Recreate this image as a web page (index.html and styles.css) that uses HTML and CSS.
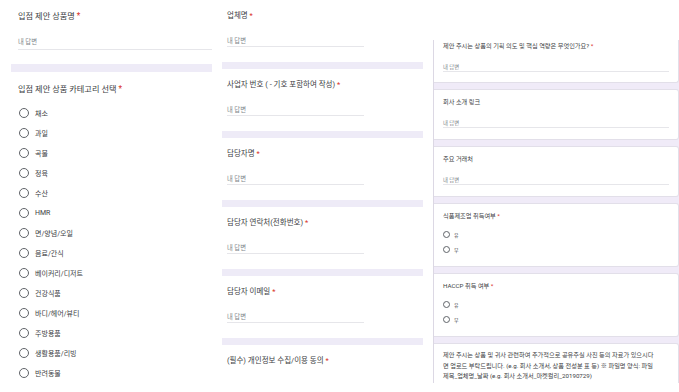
FILE: index.html
```html
<!DOCTYPE html>
<html lang="ko">
<head>
  <meta charset="UTF-8">
  <title>입점 제안</title>
  <link rel="stylesheet" href="styles.css">
</head>
<body>
  <div class="page">
    <!-- column 1 -->
    <div class="col col-a">
      <div class="q">
        <div class="title">입점 제안 상품명 <span class="req">*</span></div>
        <div class="answer">내 답변</div>
      </div>
      <div class="band"></div>
      <div class="q q-list">
        <div class="title">입점 제안 상품 카테고리 선택 <span class="req">*</span></div>
        <ul class="options">
          <li><span class="radio"></span>채소</li>
          <li><span class="radio"></span>과일</li>
          <li><span class="radio"></span>곡물</li>
          <li><span class="radio"></span>정육</li>
          <li><span class="radio"></span>수산</li>
          <li><span class="radio"></span>HMR</li>
          <li><span class="radio"></span>면/양념/오일</li>
          <li><span class="radio"></span>음료/간식</li>
          <li><span class="radio"></span>베이커리/디저트</li>
          <li><span class="radio"></span>건강식품</li>
          <li><span class="radio"></span>바디/헤어/뷰티</li>
          <li><span class="radio"></span>주방용품</li>
          <li><span class="radio"></span>생활용품/리빙</li>
          <li><span class="radio"></span>반려동물</li>
        </ul>
      </div>
    </div>

    <!-- column 2 -->
    <div class="col col-b">
      <div class="q">
        <div class="title">업체명 <span class="req">*</span></div>
        <div class="answer">내 답변</div>
      </div>
      <div class="band"></div>
      <div class="q">
        <div class="title">사업자 번호 ( - 기호 포함하여 작성) <span class="req">*</span></div>
        <div class="answer">내 답변</div>
      </div>
      <div class="band"></div>
      <div class="q">
        <div class="title">담당자명 <span class="req">*</span></div>
        <div class="answer">내 답변</div>
      </div>
      <div class="band"></div>
      <div class="q">
        <div class="title">담당자 연락처(전화번호) <span class="req">*</span></div>
        <div class="answer">내 답변</div>
      </div>
      <div class="band"></div>
      <div class="q">
        <div class="title">담당자 이메일 <span class="req">*</span></div>
        <div class="answer">내 답변</div>
      </div>
      <div class="band"></div>
      <div class="q">
        <div class="title">(필수) 개인정보 수집/이용 동의 <span class="req">*</span></div>
      </div>
    </div>

    <!-- column 3 -->
    <div class="col col-c">
      <div class="card card-first">
        <div class="title">제안 주시는 상품의 기획 의도 및 핵심 역량은 무엇인가요? <span class="req">*</span></div>
        <div class="answer">내 답변</div>
      </div>
      <div class="card">
        <div class="title">회사 소개 링크</div>
        <div class="answer">내 답변</div>
      </div>
      <div class="card">
        <div class="title">주요 거래처</div>
        <div class="answer">내 답변</div>
      </div>
      <div class="card card-radio">
        <div class="title">식품제조업 취득여부 <span class="req">*</span></div>
        <ul class="options">
          <li><span class="radio"></span>유</li>
          <li><span class="radio"></span>무</li>
        </ul>
      </div>
      <div class="card card-radio">
        <div class="title">HACCP 취득 여부 <span class="req">*</span></div>
        <ul class="options">
          <li><span class="radio"></span>유</li>
          <li><span class="radio"></span>무</li>
        </ul>
      </div>
      <div class="card card-text">
        <p>제안 주시는 상품 및 귀사 관련하여 추가적으로 공유주실 사진 등의 자료가 있으시다<br>면 업로드 부탁드립니다. (e.g. 회사 소개서, 상품 전성분 표 등) ※ 파일명 양식: 파일<br>제목_업체명_날짜 (e.g. 회사 소개서_마켓컬리_20190729)</p>
      </div>
    </div>
  </div>
</body>
</html>
```

FILE: styles.css
```css
* {
  margin: 0;
  padding: 0;
  box-sizing: border-box;
}

body {
  font-family: Roboto, 'Noto Sans CJK KR', sans-serif;
  background-color: #ffffff;
  color: #3c4043;
  width: 679px;
  height: 392px;
  overflow: hidden;
}

.page {
  display: flex;
  align-items: flex-start;
}

ul {
  list-style: none;
}

.req {
  color: #d93025;
}

.title {
  white-space: nowrap;
}

.answer {
  color: #80868b;
  border-bottom: 1px solid #e6e6ea;
}

.band {
  background-color: #eeebf7;
}

.radio {
  display: inline-block;
  border: 1.5px solid #5f6368;
  border-radius: 50%;
  flex: none;
}

.options li {
  display: flex;
  align-items: center;
}

/* Column 1 */
.col-a {
  width: 212px;
}

.col-a .q {
  padding: 10px 0 14px 18px;
}

.col-a .title {
  font-size: 8.2px;
  line-height: 12px;
}

.col-a .answer {
  font-size: 6.3px;
  line-height: 10px;
  margin-top: 15px;
  padding-bottom: 2px;
}

.col-a .band {
  height: 8px;
  margin-left: 11px;
}

.col-a .q-list {
  padding-top: 11px;
}

.col-a .options {
  margin-top: 8px;
}

.col-a .options li {
  height: 20px;
  font-size: 7px;
  gap: 6px;
}

.col-a .radio {
  width: 10px;
  height: 10px;
  margin-left: 1px;
}

/* Column 2 */
.col-b {
  width: 201px;
  margin-left: 10px;
}

.col-b .q {
  padding: 10px 0 15px 5px;
}

.col-b .title {
  font-size: 7.5px;
  line-height: 12px;
}

.col-b .answer {
  width: 137px;
  font-size: 6.3px;
  line-height: 8px;
  margin-top: 15px;
  padding-bottom: 1px;
}

.col-b .band {
  height: 7px;
}

/* Column 3 */
.col-c {
  width: 246px;
  height: 343px;
  margin: 40px 0 0 10px;
  background-color: #f0ebf8;
  border-left: 1px solid #dcd8e4;
  overflow: hidden;
  display: flex;
  flex-direction: column;
  gap: 6px;
}

.card {
  flex: none;
  background-color: #ffffff;
  border: 1px solid #e2dfe9;
  border-left: none;
  border-radius: 0 3px 3px 0;
  padding: 8px 9px 11px 9px;
}

.card .title {
  font-size: 6.2px;
  line-height: 8px;
}

.card .answer {
  font-size: 5.4px;
  line-height: 8px;
  margin-top: 13px;
}

.card-first {
  border-top: none;
  border-radius: 0 0 3px 0;
  padding-top: 2px;
  padding-bottom: 10px;
}

.card-radio {
  padding-bottom: 9px;
}

.card-radio .options {
  margin-top: 7px;
}

.card-radio .options li {
  height: 15px;
  font-size: 5px;
  gap: 4px;
}

.card-radio .radio {
  width: 7px;
  height: 7px;
  border-width: 1px;
}

.card-text {
  padding-top: 6px;
}

.card-text p {
  font-size: 6.2px;
  line-height: 10.5px;
  white-space: nowrap;
}
```
